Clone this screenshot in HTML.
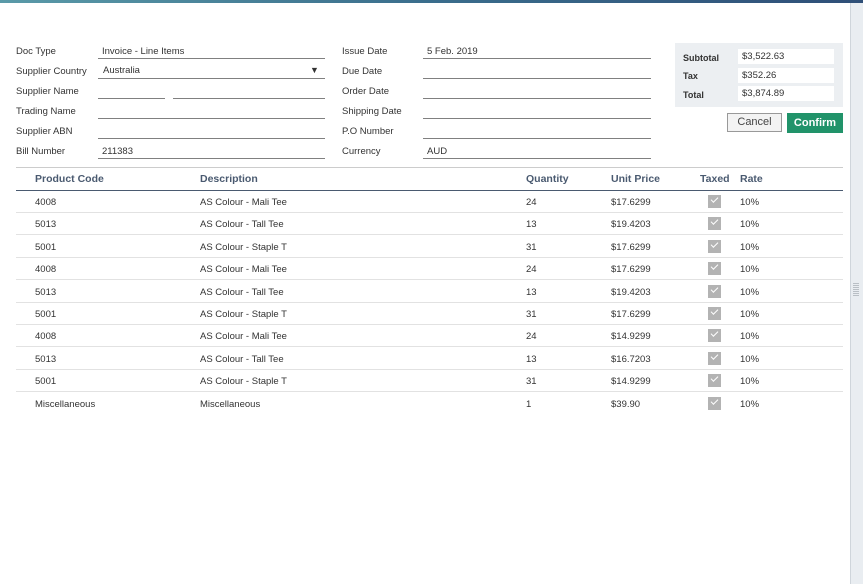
<!DOCTYPE html>
<html><head><style>
*{margin:0;padding:0;box-sizing:border-box}
body{width:863px;height:584px;background:#fff;font-family:"Liberation Sans",sans-serif;font-size:9.5px;color:#333;position:relative;overflow:hidden}
.top{position:absolute;left:0;top:0;width:863px;height:3px;background:linear-gradient(90deg,#5a9aa8,#3a6d8c 50%,#2f4f78)}
.sb{position:absolute;left:850px;top:3px;width:13px;height:581px;background:#e9edf1;border-left:1px solid #cfd5db}
.grip{position:absolute;left:853px;top:283px;width:6px;height:14px;background:repeating-linear-gradient(#b9bfc5 0 1px,transparent 1px 2px)}
.a{position:absolute;white-space:nowrap}
.ln{position:absolute;height:1px;background:#808080}
.hd{position:absolute;font-weight:bold;color:#4a5a70;font-size:10.5px}
.sum{position:absolute;left:675px;top:43px;width:168px;height:64px;background:#eceff2}
.sum .v{position:absolute;left:63px;width:96px;height:15px;background:#fff;padding:2px 4px;font-size:9.5px}
.sum .k{position:absolute;left:8px;font-weight:bold;font-size:9px}
.cb{position:absolute;left:708px;width:13px;height:13px;background:#b3b3b3}
.cb:after{content:"";position:absolute;left:3px;top:2px;width:6px;height:3px;border-left:1.3px solid #fff;border-bottom:1.3px solid #fff;transform:rotate(-45deg)}
.rs{position:absolute;left:16px;width:827px;height:1px;background:#e2e2e2}
</style></head><body>
<div class="top"></div>
<div class="sb"></div><div class="grip"></div>

<div class="a" style="left:16px;top:46px">Doc Type</div>
<div class="a" style="left:16px;top:66px">Supplier Country</div>
<div class="a" style="left:16px;top:86px">Supplier Name</div>
<div class="a" style="left:16px;top:106px">Trading Name</div>
<div class="a" style="left:16px;top:126px">Supplier ABN</div>
<div class="a" style="left:16px;top:146px">Bill Number</div>
<div class="a" style="left:102px;top:46px">Invoice - Line Items</div>
<div class="a" style="left:103px;top:65px">Australia</div>
<div class="a" style="left:310px;top:65px;font-size:9px">▼</div>
<div class="a" style="left:102px;top:146px">211383</div>
<div class="ln" style="left:98px;top:58px;width:227px"></div>
<div class="ln" style="left:98px;top:78px;width:227px"></div>
<div class="ln" style="left:98px;top:98px;width:67px"></div>
<div class="ln" style="left:173px;top:98px;width:152px"></div>
<div class="ln" style="left:98px;top:118px;width:227px"></div>
<div class="ln" style="left:98px;top:138px;width:227px"></div>
<div class="ln" style="left:98px;top:158px;width:227px"></div>

<div class="a" style="left:342px;top:46px">Issue Date</div>
<div class="a" style="left:342px;top:66px">Due Date</div>
<div class="a" style="left:342px;top:86px">Order Date</div>
<div class="a" style="left:342px;top:106px">Shipping Date</div>
<div class="a" style="left:342px;top:126px">P.O Number</div>
<div class="a" style="left:342px;top:146px">Currency</div>
<div class="a" style="left:427px;top:46px">5 Feb. 2019</div>
<div class="a" style="left:427px;top:146px">AUD</div>
<div class="ln" style="left:423px;top:58px;width:228px"></div>
<div class="ln" style="left:423px;top:78px;width:228px"></div>
<div class="ln" style="left:423px;top:98px;width:228px"></div>
<div class="ln" style="left:423px;top:118px;width:228px"></div>
<div class="ln" style="left:423px;top:138px;width:228px"></div>
<div class="ln" style="left:423px;top:158px;width:228px"></div>

<div class="sum">
<div class="k" style="top:10px">Subtotal</div><div class="v" style="top:6px">$3,522.63</div>
<div class="k" style="top:28px">Tax</div><div class="v" style="top:25px">$352.26</div>
<div class="k" style="top:47px">Total</div><div class="v" style="top:43px">$3,874.89</div>
</div>
<div class="a" style="left:727px;top:113px;width:55px;height:19px;border:1px solid #999;background:#f3f3f3;text-align:center;line-height:17px;font-size:11px;color:#444">Cancel</div>
<div class="a" style="left:787px;top:113px;width:56px;height:20px;background:#21936a;color:#fff;text-align:center;line-height:20px;font-size:11px;font-weight:bold">Confirm</div>

<div class="ln" style="left:16px;top:167px;width:827px;background:#ccc"></div>
<div class="hd" style="left:35px;top:173px">Product Code</div>
<div class="hd" style="left:200px;top:173px">Description</div>
<div class="hd" style="left:526px;top:173px">Quantity</div>
<div class="hd" style="left:611px;top:173px">Unit Price</div>
<div class="hd" style="left:700px;top:173px">Taxed</div>
<div class="hd" style="left:740px;top:173px">Rate</div>
<div class="ln" style="left:16px;top:190px;width:827px;background:#4a5a70"></div>

<div id="rows"></div>
<script>
var d=[["4008","AS Colour - Mali Tee","24","$17.6299"],["5013","AS Colour - Tall Tee","13","$19.4203"],["5001","AS Colour - Staple T","31","$17.6299"],["4008","AS Colour - Mali Tee","24","$17.6299"],["5013","AS Colour - Tall Tee","13","$19.4203"],["5001","AS Colour - Staple T","31","$17.6299"],["4008","AS Colour - Mali Tee","24","$14.9299"],["5013","AS Colour - Tall Tee","13","$16.7203"],["5001","AS Colour - Staple T","31","$14.9299"],["Miscellaneous","Miscellaneous","1","$39.90"]];
var h="";
for(var i=0;i<d.length;i++){var y=196+i*22.4;
h+='<div class="a" style="left:35px;top:'+(y+1)+'px">'+d[i][0]+'</div><div class="a" style="left:200px;top:'+(y+1)+'px">'+d[i][1]+'</div><div class="a" style="left:526px;top:'+(y+1)+'px">'+d[i][2]+'</div><div class="a" style="left:611px;top:'+(y+1)+'px">'+d[i][3]+'</div><div class="cb" style="top:'+(y-1)+'px"></div><div class="a" style="left:740px;top:'+(y+1)+'px">10%</div>';
if(i<9)h+='<div class="rs" style="top:'+(y+16)+'px"></div>';}
document.getElementById("rows").innerHTML=h;
</script>
</body></html>
